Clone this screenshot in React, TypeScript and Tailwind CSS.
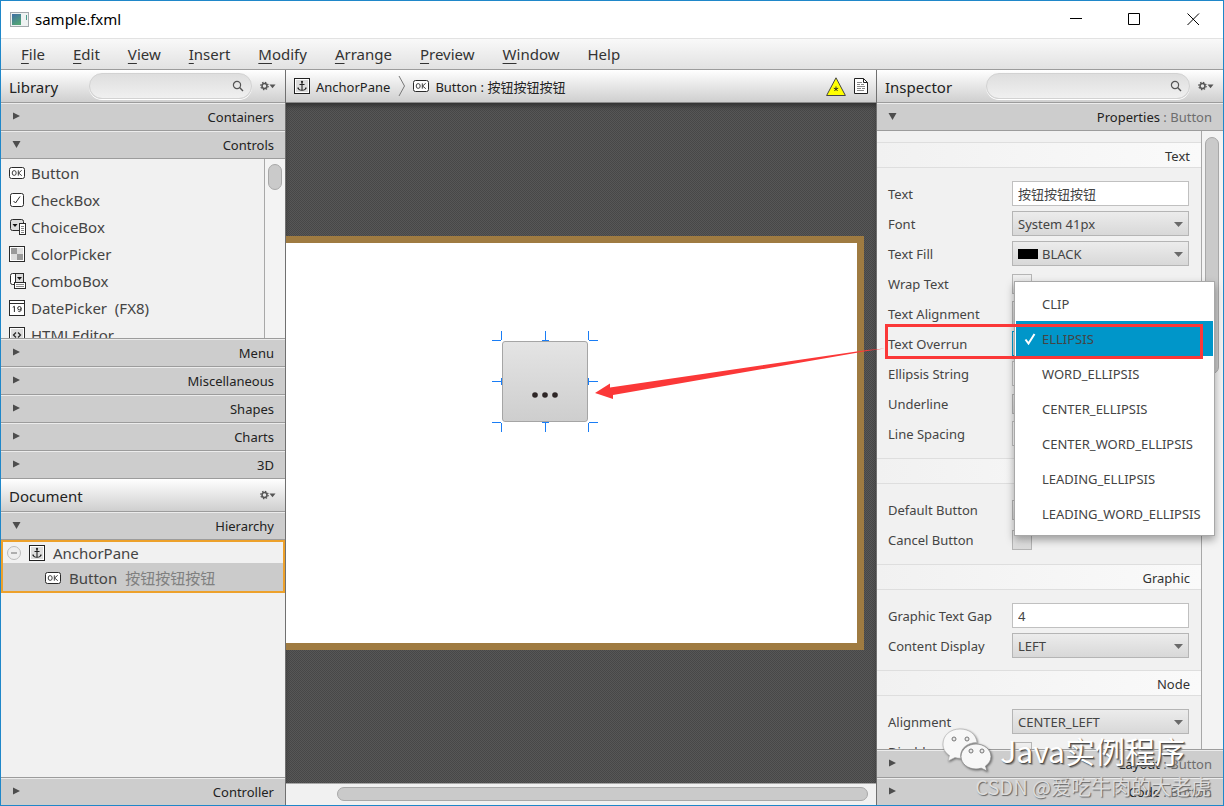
import React from "react";

const MENUS = ["File", "Edit", "View", "Insert", "Modify", "Arrange", "Preview", "Window"];
const OVERRUN = [
  "CLIP",
  "ELLIPSIS",
  "WORD_ELLIPSIS",
  "CENTER_ELLIPSIS",
  "CENTER_WORD_ELLIPSIS",
  "LEADING_ELLIPSIS",
  "LEADING_WORD_ELLIPSIS",
];

function OkIcon() {
  return (
    <svg width="16" height="12" viewBox="0 0 16 12" fill="none" className="shrink-0">
      <rect x="0.5" y="0.5" width="15" height="11" rx="2" fill="#fff" stroke="#2a2a2a" />
      <ellipse cx="5.2" cy="6" rx="2" ry="2.4" stroke="#2a2a2a" strokeWidth="0.9" />
      <path d="M9.3 3.3v5.4M12.7 3.3L9.6 6l3.2 2.7" stroke="#2a2a2a" strokeWidth="0.9" />
    </svg>
  );
}

function AnchorIcon() {
  return (
    <svg width="16" height="16" viewBox="0 0 16 16" fill="none" className="shrink-0">
      <rect x="0.5" y="0.5" width="15" height="15" fill="#fff" stroke="#222" />
      <rect x="2" y="2" width="12" height="12" fill="#ddd" />
      <circle cx="8" cy="3.8" r="1.1" fill="#222" />
      <path d="M8 4v8.500M5.500 6.500h5M4 9.500c.3 2 2 2.800 4 2.800s3.700-.8 4-2.800M3.400 10.200h1.600M11 10.200h1.600" stroke="#222" strokeWidth="1.100" />
    </svg>
  );
}

function CheckBoxIcon() {
  return (
    <svg width="16" height="16" viewBox="0 0 16 16" fill="none">
      <rect x="1.500" y="1.500" width="13" height="13" rx="2" fill="#fff" stroke="#2a2a2a" />
      <path d="M4.500 9l2 2 4.500-6.500" stroke="#2a2a2a" />
    </svg>
  );
}

function ChoiceBoxIcon() {
  return (
    <svg width="17" height="16" viewBox="0 0 17 16" fill="none" className="-mr-px">
      <rect x="1.500" y="0.500" width="13" height="11" rx="2" fill="#ddd" stroke="#2a2a2a" />
      <path d="M3.500 5h5L6 8z" fill="#111" />
      <rect x="10.500" y="4.500" width="6" height="11" fill="#fff" stroke="#2a2a2a" />
      <path d="M12 7.500h3M12 9.500h3M12 11.500h3M12 13.500h3" stroke="#888" />
    </svg>
  );
}

function ColorPickerIcon() {
  return (
    <svg width="16" height="16" viewBox="0 0 16 16" fill="none">
      <rect x="0.500" y="0.500" width="15" height="15" fill="#fff" stroke="#2a2a2a" />
      <rect x="2" y="2" width="12" height="12" fill="#ddd" />
      <path d="M2 2h6v6h6v6H8V8H2z" fill="#999" />
    </svg>
  );
}

function ComboBoxIcon() {
  return (
    <svg width="17" height="16" viewBox="0 0 17 16" fill="none" className="-mr-px">
      <path d="M6.500 11.500h-3a2 2 0 0 1-2-2v-7a2 2 0 0 1 2-2h3" fill="#fff" stroke="#2a2a2a" />
      <rect x="6.500" y="0.500" width="8" height="10" fill="#ddd" stroke="#2a2a2a" />
      <path d="M8 4h5l-2.500 3z" fill="#111" />
      <rect x="5.500" y="9.500" width="11" height="6" fill="#fff" stroke="#2a2a2a" />
      <path d="M7 11.500h8M7 13.500h8" stroke="#888" />
    </svg>
  );
}

function DatePickerIcon() {
  return (
    <svg width="16" height="16" viewBox="0 0 16 16" fill="none">
      <rect x="0.500" y="0.500" width="15" height="15" fill="#fff" stroke="#2a2a2a" />
      <path d="M1 3.500h14" stroke="#2a2a2a" />
      <path d="M3.800 7.300l1.600-1v5.700M12 10.500c-.5 1.300-2.500 1.500-3 .3" stroke="#2a2a2a" />
      <circle cx="10.400" cy="8.200" r="1.700" stroke="#2a2a2a" />
      <path d="M12.100 8.200c0 1.200 0 1.800-.4 2.600" stroke="#2a2a2a" />
    </svg>
  );
}

function HtmlEditorIcon() {
  return (
    <svg width="16" height="16" viewBox="0 0 16 16" fill="none">
      <rect x="0.500" y="0.500" width="15" height="15" fill="#fff" stroke="#2a2a2a" />
      <rect x="2" y="2" width="12" height="12" fill="#ddd" />
      <path d="M7 5.500L4.500 8 7 10.500M9 5.500L11.500 8 9 10.500" stroke="#2a2a2a" strokeWidth="1.300" />
    </svg>
  );
}

const LIBRARY: { name: string; icon: React.ReactNode }[] = [
  { name: "Button", icon: <OkIcon /> },
  { name: "CheckBox", icon: <CheckBoxIcon /> },
  { name: "ChoiceBox", icon: <ChoiceBoxIcon /> },
  { name: "ColorPicker", icon: <ColorPickerIcon /> },
  { name: "ComboBox", icon: <ComboBoxIcon /> },
  { name: "DatePicker  (FX8)", icon: <DatePickerIcon /> },
  { name: "HTMLEditor", icon: <HtmlEditorIcon /> },
];

function GearMenu({ label }: { label: string }) {
  return (
    <button aria-label={label} className="shrink-0">
      <svg width="16" height="10" viewBox="0 0 16 10" fill="none">
        <circle cx="4.500" cy="5" r="2.500" stroke="#555" strokeWidth="1.500" />
        <circle cx="4.500" cy="5" r="3.700" stroke="#555" strokeWidth="1.200" strokeDasharray="1.453 1.453" />
        <path d="M9.500 3.500h6L12.500 7.200z" fill="#555" />
      </svg>
    </button>
  );
}

function PanelHeader({ title, search }: { title: string; search?: string }) {
  return (
    <div className="flex h-[33px] shrink-0 items-center border-b border-[#9c9c9c] bg-linear-to-b from-white to-[#cfcfcf] pr-[9px] pl-2">
      <h2 className="pt-[2px] text-[15px] leading-5 text-[#222]">{title}</h2>
      {search ? (
        <label className={"ml-auto mr-2 flex h-[26px] items-center rounded-full border border-[#d2d2d2] bg-linear-to-b from-[#dedede] to-[#f0f0f0] pr-[7px] shadow-[0_1px_0_#fff] " + search}>
          <input aria-label={"Search " + title} className="w-full min-w-0 bg-transparent pl-3 text-[13px] outline-none" />
          <svg width="12" height="12" viewBox="0 0 12 12" fill="none" className="shrink-0">
            <circle cx="5" cy="5" r="3.600" stroke="#555" strokeWidth="1.200" />
            <path d="M7.600 7.600L11 11" stroke="#555" strokeWidth="1.400" />
          </svg>
        </label>
      ) : (
        <span className="ml-auto" />
      )}
      <GearMenu label={title + " menu"} />
    </div>
  );
}

function Section({ title, suffix, open, last }: { title: string; suffix?: string; open?: boolean; last?: boolean }) {
  return (
    <button
      aria-expanded={!!open}
      className={
        "flex w-full shrink-0 items-center border-t border-t-[#ececec] bg-[#cdcdcd] pr-[11px] pl-[11px] text-[13px] leading-5 text-[#222] " +
        (last ? "h-[27px]" : "h-7 border-b border-b-[#9c9c9c]")
      }
    >
      <svg width="9" height="9" viewBox="0 0 9 9" className="mb-[2px] shrink-0">
        <path d={open ? "M0.500 1h8L4.500 8z" : "M1 0.500v7L8 4z"} fill="#4d4d4d" />
      </svg>
      <span className="ml-auto whitespace-pre">
        {title}
        {suffix && <span className="text-[#6d6d6d]">{" : " + suffix}</span>}
      </span>
    </button>
  );
}

function GroupTitle({ children }: { children?: React.ReactNode }) {
  return (
    <h3 className="h-[26px] border-y border-[#dedede] bg-linear-to-r from-[#f1f1f1] to-[#fafafa] pt-[3px] pr-[11px] text-right text-[13px] leading-5 text-[#333]">
      {children}
    </h3>
  );
}

function Field({ id, label, children }: { id: string; label: string; children: React.ReactNode }) {
  return (
    <div className="grid h-[25px] grid-cols-[124px_1fr] items-center">
      <label htmlFor={id} className="whitespace-nowrap pt-[1px] text-[13px] leading-5 text-[#444]">
        {label}
      </label>
      {children}
    </div>
  );
}

function TextBox({ id, value }: { id: string; value: string }) {
  return (
    <input
      id={id}
      defaultValue={value}
      className="h-[25px] w-full min-w-0 border border-[#c0c0c0] bg-white px-[5px] text-[13px] leading-5 text-[#444] outline-none"
    />
  );
}

function Combo({ id, value, swatch, focused }: { id: string; value: string; swatch?: boolean; focused?: boolean }) {
  return (
    <div className="relative">
      <select
        id={id}
        className={
          "block h-[25px] w-full appearance-none border bg-linear-to-b from-[#ececec] to-[#d8d8d8] pt-[1px] text-[13px] leading-5 text-[#444] outline-none " +
          (focused ? "border-[#039ed3] " : "border-[#b5b5b5] ") +
          (swatch ? "pl-[29px]" : "pl-[5px]")
        }
      >
        <option>{value}</option>
      </select>
      {swatch && <span className="pointer-events-none absolute top-2 left-[6px] h-[10px] w-5 bg-black" />}
      <svg width="9" height="5" viewBox="0 0 9 5" className="pointer-events-none absolute top-[11px] right-[6px]">
        <path d="M0 0h9L4.500 5z" fill="#6a6a6a" />
      </svg>
    </div>
  );
}

function Check({ id }: { id: string }) {
  return (
    <input
      id={id}
      type="checkbox"
      className="size-5 appearance-none border border-[#b5b5b5] bg-linear-to-b from-[#f0f0f0] to-[#dadada]"
    />
  );
}

function LeftColumn() {
  return (
    <aside className="flex min-h-0 flex-col border-r border-[#707070] bg-[#f1f1f1]">
      <PanelHeader title="Library" search="w-[163px]" />
      <Section title="Containers" />
      <Section title="Controls" open />
      <div className="flex h-[180px] shrink-0 border-b border-[#9c9c9c]">
        <ul className="flex-1 overflow-hidden pl-2">
          {LIBRARY.map((item) => (
            <li key={item.name} className="flex h-[27px] items-center gap-[6px] text-[15px] leading-5 text-[#444]">
              <span className="shrink-0">{item.icon}</span>
              <span className="whitespace-pre">{item.name}</span>
            </li>
          ))}
        </ul>
        <div className="w-[21px] border-l border-[#a8a8a8] bg-[#f3f3f3] px-[3px] pt-[5px]">
          <div className="h-[26px] w-[14px] rounded-full border border-[#a8a8a8] bg-[#cacaca]" />
        </div>
      </div>
      <Section title="Menu" />
      <Section title="Miscellaneous" />
      <Section title="Shapes" />
      <Section title="Charts" />
      <Section title="3D" />
      <PanelHeader title="Document" />
      <Section title="Hierarchy" open />
      <ul className="border-2 border-[#eda12b] text-[15px] leading-5 text-[#444]">
        <li className="flex h-[21px] items-center pl-1">
          <svg width="14" height="14" viewBox="0 0 14 14" fill="none" className="mr-2 shrink-0">
            <circle cx="7" cy="7" r="6.500" fill="#eee" stroke="#bbb" />
            <path d="M4 7h6" stroke="#999" strokeWidth="1.500" />
          </svg>
          <AnchorIcon />
          <span className="pl-2">AnchorPane</span>
        </li>
        <li className="flex h-7 items-center bg-[#cbcbcb] pt-[2px] pl-[42px]">
          <OkIcon />
          <span className="pl-2">Button</span>
          <span className="pl-2 text-[#808080]">按钮按钮按钮</span>
        </li>
      </ul>
      <div className="min-h-0 flex-1 border-b border-[#9c9c9c]" />
      <Section title="Controller" last />
    </aside>
  );
}

function Editor() {
  return (
    <main className="flex min-w-0 flex-col border-r border-[#707070]">
      <div className="flex h-[33px] shrink-0 items-center border-b border-[#8a8a8a] bg-linear-to-b from-white to-[#cfcfcf] px-2 text-[13px] leading-5 text-[#222]">
        <AnchorIcon />
        <span className="pt-[1px] pl-[6px]">AnchorPane</span>
        <svg width="8" height="22" viewBox="0 0 8 22" fill="none" className="mr-[7px] ml-2">
          <path d="M1 1l5.500 10L1 21" stroke="#777" />
        </svg>
        <OkIcon />
        <span className="pt-[1px] pl-[6px]">Button : 按钮按钮按钮</span>
        <button aria-label="Warnings" className="ml-auto">
          <svg width="20" height="19" viewBox="0 0 20 19" fill="none">
            <path d="M10 0.800L19.400 18.500H0.600z" fill="#ff0" stroke="#444" />
            <path d="M10 9.500v2.500M10 12l-2.200-.8M10 12l2.200-.8M10 12l-1.500 2M10 12l1.500 2" stroke="#222" strokeWidth="0.900" />
          </svg>
        </button>
        <button aria-label="Show document" className="ml-2">
          <svg width="14" height="16" viewBox="0 0 14 16" fill="none">
            <path d="M0.500 0.500h9l4 4v11h-13z" fill="#fff" stroke="#222" />
            <path d="M9.500 0.500v4h4" stroke="#222" />
            <path d="M3 4.500h5M3 6.500h3M7 6.500h3M3 8.500h8M3 10.500h4M8 10.500h3M3 12.500h7" stroke="#888" />
          </svg>
        </button>
      </div>
      <div className="min-h-0 flex-1 overflow-hidden bg-[#4f4f4f] bg-[conic-gradient(#474747_25%,#575757_0_50%,#474747_0_75%,#575757_0)] bg-[length:2px_2px] pt-[133px] pr-3 shadow-[inset_0_4px_4px_-1px_#333]">
        <div className="relative h-[414px] border-y-[7px] border-r-[7px] border-[#9f7b41] bg-white">
          <button
            aria-label="按钮按钮按钮"
            className="absolute top-[98px] left-[216px] h-[81px] w-[86px] rounded-[3px] border border-[#a5a5a5] bg-linear-to-b from-[#e4e4e4] to-[#cecece]"
          >
            <svg width="26" height="6" viewBox="0 0 26 6" className="mx-auto mt-[26px]">
              <circle cx="3" cy="3" r="2.800" fill="#2e2626" />
              <circle cx="13" cy="3" r="2.800" fill="#2e2626" />
              <circle cx="23" cy="3" r="2.800" fill="#2e2626" />
            </svg>
          </button>
          <svg width="106" height="101" viewBox="0 0 106 101" fill="none" className="absolute top-[88px] left-[206px]">
            <path
              d="M0 9.500h9M9.500 0v9M53.500 0v9M50 9.500h7M97 9.500h9M96.500 0v9M0 50.500h9M9.500 47v7M97 50.500h9M96.500 47v7M0 91.500h9M9.500 92v9M50 91.500h7M53.500 92v9M97 91.500h9M96.500 92v9"
              stroke="#1a7df5"
            />
          </svg>
        </div>
      </div>
      <div className="flex h-[22px] shrink-0 items-start border-t border-[#a8a8a8] bg-[#f1f1f1] pt-[3px] pr-2 pl-[51px]">
        <div className="h-[14px] flex-1 rounded-full border border-[#a8a8a8] bg-[#cacaca]" />
      </div>
    </main>
  );
}

function OverrunPopup() {
  return (
    <ul
      role="listbox"
      aria-label="Text Overrun"
      className="absolute top-[211px] right-2 border border-[#a8a8a8] bg-white py-1 shadow-[0_4px_8px_rgba(0,0,0,0.35)]"
    >
      {OVERRUN.map((name) => {
        const selected = name === "ELLIPSIS";
        return (
          <li
            key={name}
            role="option"
            aria-selected={selected}
            className={
              "mx-[1px] flex h-[35px] w-[197px] items-center pl-2 text-[13px] leading-5 text-[#444] " +
              (selected ? "bg-[#0096c9]" : "")
            }
          >
            <svg width="12" height="12" viewBox="0 0 12 12" fill="none" className="mr-[6px] shrink-0">
              {selected && <path d="M1.500 6.500l3 4L10.500 1" stroke="#fff" strokeWidth="2" />}
            </svg>
            {name}
          </li>
        );
      })}
    </ul>
  );
}

function Inspector() {
  return (
    <aside className="relative flex min-h-0 flex-col bg-[#f1f1f1]">
      <PanelHeader title="Inspector" search="w-[204px]" />
      <Section title="Properties" suffix="Button" open />
      <div className="flex min-h-0 flex-1 border-b border-[#9c9c9c]">
        <div className="min-w-0 flex-1 overflow-hidden pt-[11px]">
          <GroupTitle>Text</GroupTitle>
          <div className="flex flex-col gap-[5px] pt-[13px] pr-3 pb-3 pl-[11px]">
            <Field id="text" label="Text"><TextBox id="text" value="按钮按钮按钮" /></Field>
            <Field id="font" label="Font"><Combo id="font" value="System 41px" /></Field>
            <Field id="fill" label="Text Fill"><Combo id="fill" value="BLACK" swatch /></Field>
            <Field id="wrap" label="Wrap Text"><Check id="wrap" /></Field>
            <Field id="talign" label="Text Alignment"><Combo id="talign" value="" /></Field>
            <Field id="overrun" label="Text Overrun"><Combo id="overrun" value="ELLIPSIS" focused /></Field>
            <Field id="estr" label="Ellipsis String"><TextBox id="estr" value="" /></Field>
            <Field id="underline" label="Underline"><Check id="underline" /></Field>
            <Field id="spacing" label="Line Spacing"><TextBox id="spacing" value="" /></Field>
          </div>
          <GroupTitle />
          <div className="flex flex-col gap-[5px] pt-[13px] pr-3 pb-3 pl-[11px]">
            <Field id="default" label="Default Button"><Check id="default" /></Field>
            <Field id="cancel" label="Cancel Button"><Check id="cancel" /></Field>
          </div>
          <GroupTitle>Graphic</GroupTitle>
          <div className="flex flex-col gap-[5px] pt-[13px] pr-3 pb-3 pl-[11px]">
            <Field id="gap" label="Graphic Text Gap"><TextBox id="gap" value="4" /></Field>
            <Field id="display" label="Content Display"><Combo id="display" value="LEFT" /></Field>
          </div>
          <GroupTitle>Node</GroupTitle>
          <div className="flex flex-col gap-[5px] pt-[13px] pr-3 pb-3 pl-[11px]">
            <Field id="align" label="Alignment"><Combo id="align" value="CENTER_LEFT" /></Field>
            <Field id="disable" label="Disable"><Check id="disable" /></Field>
          </div>
        </div>
        <div className="w-[22px] border-l border-[#a8a8a8] bg-[#f3f3f3] px-[3px] pt-[6px]">
          <div className="h-[237px] w-[14px] rounded-full border border-[#a8a8a8] bg-[#cacaca]" />
        </div>
      </div>
      <Section title="Layout" suffix="Button" />
      <Section title="Code" suffix="Button" last />
      <OverrunPopup />
      <div className="pointer-events-none absolute top-[254px] left-2 h-[35px] w-[318px] border-[3px] border-[#fb3838]" />
      <svg width="290" height="52" viewBox="0 0 290 52" className="pointer-events-none absolute top-[277px] right-[338px]">
        <path d="M0 46L15 36.500V40.500L272 3L290 1.500L272 4L18 48V52z" fill="#fb3838" />
      </svg>
      <div className="pointer-events-none absolute right-[38px] bottom-[33px] flex items-center gap-2">
        <svg width="50" height="44" viewBox="0 0 50 44" className="drop-shadow-[1px_1px_1px_rgba(0,0,0,0.5)]">
          <path d="M18 1C8 1 1 7.500 1 16c0 5 2.500 9 6.500 11.500L6 33l7-3.500c2 .6 4 .8 6 .7-2-8 5-15.700 16-15.700C34 6 27 1 18 1z" fill="#f7f7f7" stroke="#aaa" strokeWidth="0.600" />
          <circle cx="12" cy="11" r="2" fill="#e8e8e8" stroke="#777" />
          <circle cx="25" cy="11" r="2" fill="#e8e8e8" stroke="#777" />
          <path d="M34 16c-8 0-15 5.500-15 12.500S25.500 41 34 41c2 0 3.500-.3 5.200-.8L45 43l-1.500-5c3.500-2.300 5.500-5.500 5.500-9.500C49 21.500 42 16 34 16z" fill="#f7f7f7" stroke="#888" strokeWidth="0.800" />
          <circle cx="29" cy="23" r="2" fill="#e8e8e8" stroke="#777" />
          <circle cx="40" cy="23" r="2" fill="#e8e8e8" stroke="#777" />
        </svg>
        <span className="whitespace-nowrap font-['Noto_Sans_CJK_SC',sans-serif] text-[30px] leading-9 text-white [text-shadow:1px_1px_1px_#444,2px_2px_1px_#999]">
          Java实例程序
        </span>
      </div>
      <span className="pointer-events-none absolute right-3 bottom-[6px] whitespace-nowrap font-['Noto_Sans_CJK_SC',sans-serif] text-[20px] leading-6 text-[#dcdcdc] [text-shadow:1px_1px_1px_#666]">
        CSDN @爱吃牛肉的大老虎
      </span>
    </aside>
  );
}

export default function App() {
  return (
    <div className="flex h-screen flex-col overflow-hidden border border-[#1f87c9] bg-white font-['Noto_Sans','Noto_Sans_CJK_SC',sans-serif]">
      <header className="flex h-[37px] shrink-0 items-center pl-[9px]">
        <svg width="19" height="15" viewBox="0 0 19 15" fill="none">
          <defs>
            <linearGradient id="appicon" x1="0" y1="0" x2="0.500" y2="1">
              <stop offset="0" stopColor="#3f6ea5" />
              <stop offset="1" stopColor="#52a377" />
            </linearGradient>
          </defs>
          <rect x="0.500" y="0.500" width="18" height="14" fill="#eef2f2" stroke="#a3a9ad" />
          <rect x="2" y="2" width="9" height="11" fill="url(#appicon)" />
          <path d="M16.500 3v5" stroke="#4b9b8b" />
        </svg>
        <h1 className="pb-[2px] pl-[6px] text-[15px] leading-5 text-black">sample.fxml</h1>
        <div className="ml-auto flex">
          <button aria-label="Minimize" className="flex h-9 w-[58px] items-center justify-center">
            <svg width="13" height="13" viewBox="0 0 13 13"><path d="M0 5.500h12" stroke="#000" /></svg>
          </button>
          <button aria-label="Maximize" className="flex h-9 w-[58px] items-center justify-center">
            <svg width="13" height="13" viewBox="0 0 13 13" fill="none"><path d="M0.500 0.500h11v11h-11z" stroke="#000" /></svg>
          </button>
          <button aria-label="Close" className="flex h-9 w-[60px] items-center justify-center">
            <svg width="13" height="13" viewBox="0 0 13 13" fill="none"><path d="M0.500 0.500l11.500 11.500M12 0.500L0.500 12" stroke="#000" /></svg>
          </button>
        </div>
      </header>
      <nav className="flex h-8 shrink-0 items-center gap-7 border-t border-b border-t-[#e2e2e2] border-b-[#9c9c9c] bg-linear-to-b from-[#f9f9f9] to-[#e2e2e2] pl-5 text-[15px] leading-5 text-[#333]">
        {MENUS.map((name) => (
          <button key={name}>
            <span className="underline decoration-1 underline-offset-[3px]">{name[0]}</span>
            {name.slice(1)}
          </button>
        ))}
        <button>Help</button>
      </nav>
      <div className="grid min-h-0 flex-1 grid-cols-[285px_1fr_346px] grid-rows-[minmax(0,1fr)]">
        <LeftColumn />
        <Editor />
        <Inspector />
      </div>
    </div>
  );
}
